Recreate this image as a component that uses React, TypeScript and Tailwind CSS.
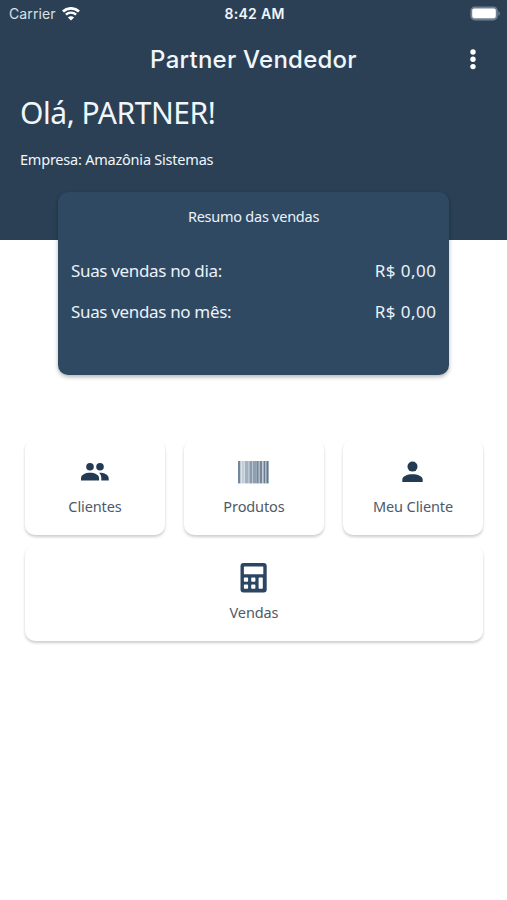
import type { ReactNode } from "react";

function WifiIcon() {
  return (
    <svg width="18" height="14" viewBox="0 0 18 14" fill="none" stroke="white">
      <path d="M1 4.6C5.5.3 12.5.3 17 4.6" strokeWidth="2.8" />
      <path d="M3.9 7.7c2.9-2.8 7.3-2.8 10.2 0" strokeWidth="2.4" />
      <path d="M9 13.4 5.9 10.4c1.7-1.6 4.5-1.6 6.2 0z" fill="white" stroke="none" />
    </svg>
  );
}

function BatteryIcon() {
  return (
    <svg width="30" height="16" viewBox="0 0 30 16">
      <rect x="0.4" y="0.4" width="27.4" height="14" rx="4.4" fill="#71808f" />
      <rect x="2.2" y="2.4" width="23.6" height="9.8" rx="2.2" fill="white" />
      <path d="M28.4 5.2c1.8.8 1.8 3.8 0 4.6z" fill="#7d8b99" />
    </svg>
  );
}

function PeopleIcon() {
  return (
    <svg width="28" height="20" viewBox="0 0 28 20" fill="#223b53">
      <circle cx="9" cy="4.8" r="3.8" />
      <circle cx="19" cy="4.8" r="3.8" />
      <path d="M0 18.6V16.4C0 12.6 4.4 10.8 9 10.8s9.1 1.8 9.1 5.6v2.2z" />
      <path d="M18.2 10.8c5.2 0 9.5 1.9 9.5 5.6v2.2h-7.4v-2.3c0-2.3-.7-4-2.1-5.5z" />
    </svg>
  );
}

function PersonIcon() {
  return (
    <svg width="22" height="22" viewBox="0 0 22 22" fill="#223b53">
      <circle cx="10.5" cy="5.6" r="5" />
      <path d="M.3 21.1v-2.4c0-3.6 5-5.5 10.2-5.5s10.2 1.9 10.2 5.5v2.4z" />
    </svg>
  );
}

const BARS = [
  { x: 0, w: 2.6, fill: "#73869a" },
  { x: 2.6, w: 1, fill: "#dde4ea" },
  { x: 3.6, w: 2.6, fill: "#c3cdd7" },
  { x: 6.6, w: 3.4, fill: "#a3b1bf" },
  { x: 10, w: 1.4, fill: "#bac6d1" },
  { x: 11.4, w: 2.6, fill: "#8a9bac" },
  { x: 14, w: 1, fill: "#bac6d1" },
  { x: 15, w: 3.4, fill: "#8f9fb0" },
  { x: 18.4, w: 2.4, fill: "#73869a" },
  { x: 20.8, w: 1, fill: "#b3bfca" },
  { x: 21.8, w: 2.6, fill: "#73869a" },
  { x: 25.4, w: 2, fill: "#697d92" },
  { x: 27.4, w: 1, fill: "#a3b1bf" },
  { x: 28.4, w: 2.2, fill: "#63788d" },
];

function BarcodeIcon() {
  return (
    <svg width="32" height="23" viewBox="0 0 32 23">
      {BARS.map((bar) => (
        <rect key={bar.x} x={bar.x} y="0" width={bar.w} height="22.4" fill={bar.fill} />
      ))}
    </svg>
  );
}

function CalculatorIcon() {
  return (
    <svg width="28" height="30" viewBox="0 0 28 30">
      <rect x="0.5" y="0" width="26.2" height="29.4" rx="3" fill="#2b4663" />
      <g fill="white">
        <rect x="3.9" y="3.5" width="19.4" height="7.8" rx="0.6" />
        <rect x="3.9" y="14.6" width="4.2" height="4.2" rx="0.8" />
        <rect x="11.2" y="14.6" width="4.2" height="4.2" rx="0.8" />
        <rect x="3.9" y="21.6" width="4.2" height="4.2" rx="0.8" />
        <rect x="11.2" y="21.6" width="4.2" height="4.2" rx="0.8" />
        <rect x="18.6" y="14.6" width="4.2" height="11.2" rx="0.8" />
      </g>
    </svg>
  );
}

interface MenuCardProps {
  label: string;
  children: ReactNode;
  className?: string;
}

function MenuCard({ label, children, className = "" }: MenuCardProps) {
  return (
    <button
      type="button"
      className={`flex h-24 flex-col items-center rounded-[10px] bg-white pt-[18px] shadow-[0_2px_3px_rgba(0,0,0,0.2)] ${className}`}
    >
      <span className="flex h-[30px] items-center justify-center">{children}</span>
      <span className="mt-[9px] text-[14.5px] leading-5 tracking-[-0.1px] whitespace-nowrap text-[#4e5a68]">
        {label}
      </span>
    </button>
  );
}

function SalesRow({ label, value }: { label: string; value: string }) {
  return (
    <div className="flex h-[41px] items-center justify-between text-[17px] whitespace-nowrap">
      <span className="tracking-[-0.34px]">{label}</span>
      <span className="-mr-[0.4px] tracking-[0.45px]">{value}</span>
    </div>
  );
}

export default function App() {
  return (
    <div className="h-[900px] w-[507px] overflow-hidden bg-white font-['Noto_Sans',sans-serif]">
      <header className="h-60 bg-[#2b4055] text-[#f1f6fb]">
        <div className="grid h-[27px] grid-cols-3 items-center pr-[7px] pl-[9px] font-['Inter',sans-serif] text-[14px]">
          <div className="flex items-center gap-[6px] text-[#d9e0e7]">
            <span className="tracking-[0.1px]">Carrier</span>
            <WifiIcon />
          </div>
          <span className="text-center text-[14px] font-semibold tracking-[0.3px]">8:42 AM</span>
          <div className="flex justify-end">
            <BatteryIcon />
          </div>
        </div>
        <div className="grid h-[65px] grid-cols-[60px_1fr_60px] items-center">
          <span />
          <h1 className="text-center font-['Inter',sans-serif] text-[24px] font-medium tracking-[0.25px] whitespace-nowrap">
            Partner Vendedor
          </h1>
          <button type="button" aria-label="Menu" className="flex justify-center pr-[9px]">
            <svg width="6" height="21" viewBox="0 0 6 21" fill="white">
              <circle cx="3" cy="3" r="2.7" />
              <circle cx="3" cy="10.3" r="2.7" />
              <circle cx="3" cy="17.6" r="2.7" />
            </svg>
          </button>
        </div>
        <div className="px-5">
          <p className="h-11 text-[30px] leading-[42px] tracking-[-0.45px]">Olá, PARTNER!</p>
          <p className="mt-[13px] text-[14.5px] leading-5 tracking-[-0.22px]">Empresa: Amazônia Sistemas</p>
        </div>
      </header>

      <section className="relative mx-auto -mt-12 h-[183px] w-[391px] rounded-[10px] bg-[#304962] px-[13px] pt-[14px] text-[#eaf2fa] shadow-[0_2px_4px_rgba(0,0,0,0.3)]">
        <h2 className="mb-[24px] text-center text-[14.5px] leading-5 tracking-[-0.25px]">Resumo das vendas</h2>
        <SalesRow label="Suas vendas no dia:" value="R$ 0,00" />
        <SalesRow label="Suas vendas no mês:" value="R$ 0,00" />
      </section>

      <main className="mt-16 grid grid-cols-3 gap-x-[19px] gap-y-[10px] pr-6 pl-[25px]">
        <MenuCard label="Clientes">
          <PeopleIcon />
        </MenuCard>
        <MenuCard label="Produtos">
          <BarcodeIcon />
        </MenuCard>
        <MenuCard label="Meu Cliente">
          <PersonIcon />
        </MenuCard>
        <MenuCard label="Vendas" className="col-span-3">
          <CalculatorIcon />
        </MenuCard>
      </main>
    </div>
  );
}
